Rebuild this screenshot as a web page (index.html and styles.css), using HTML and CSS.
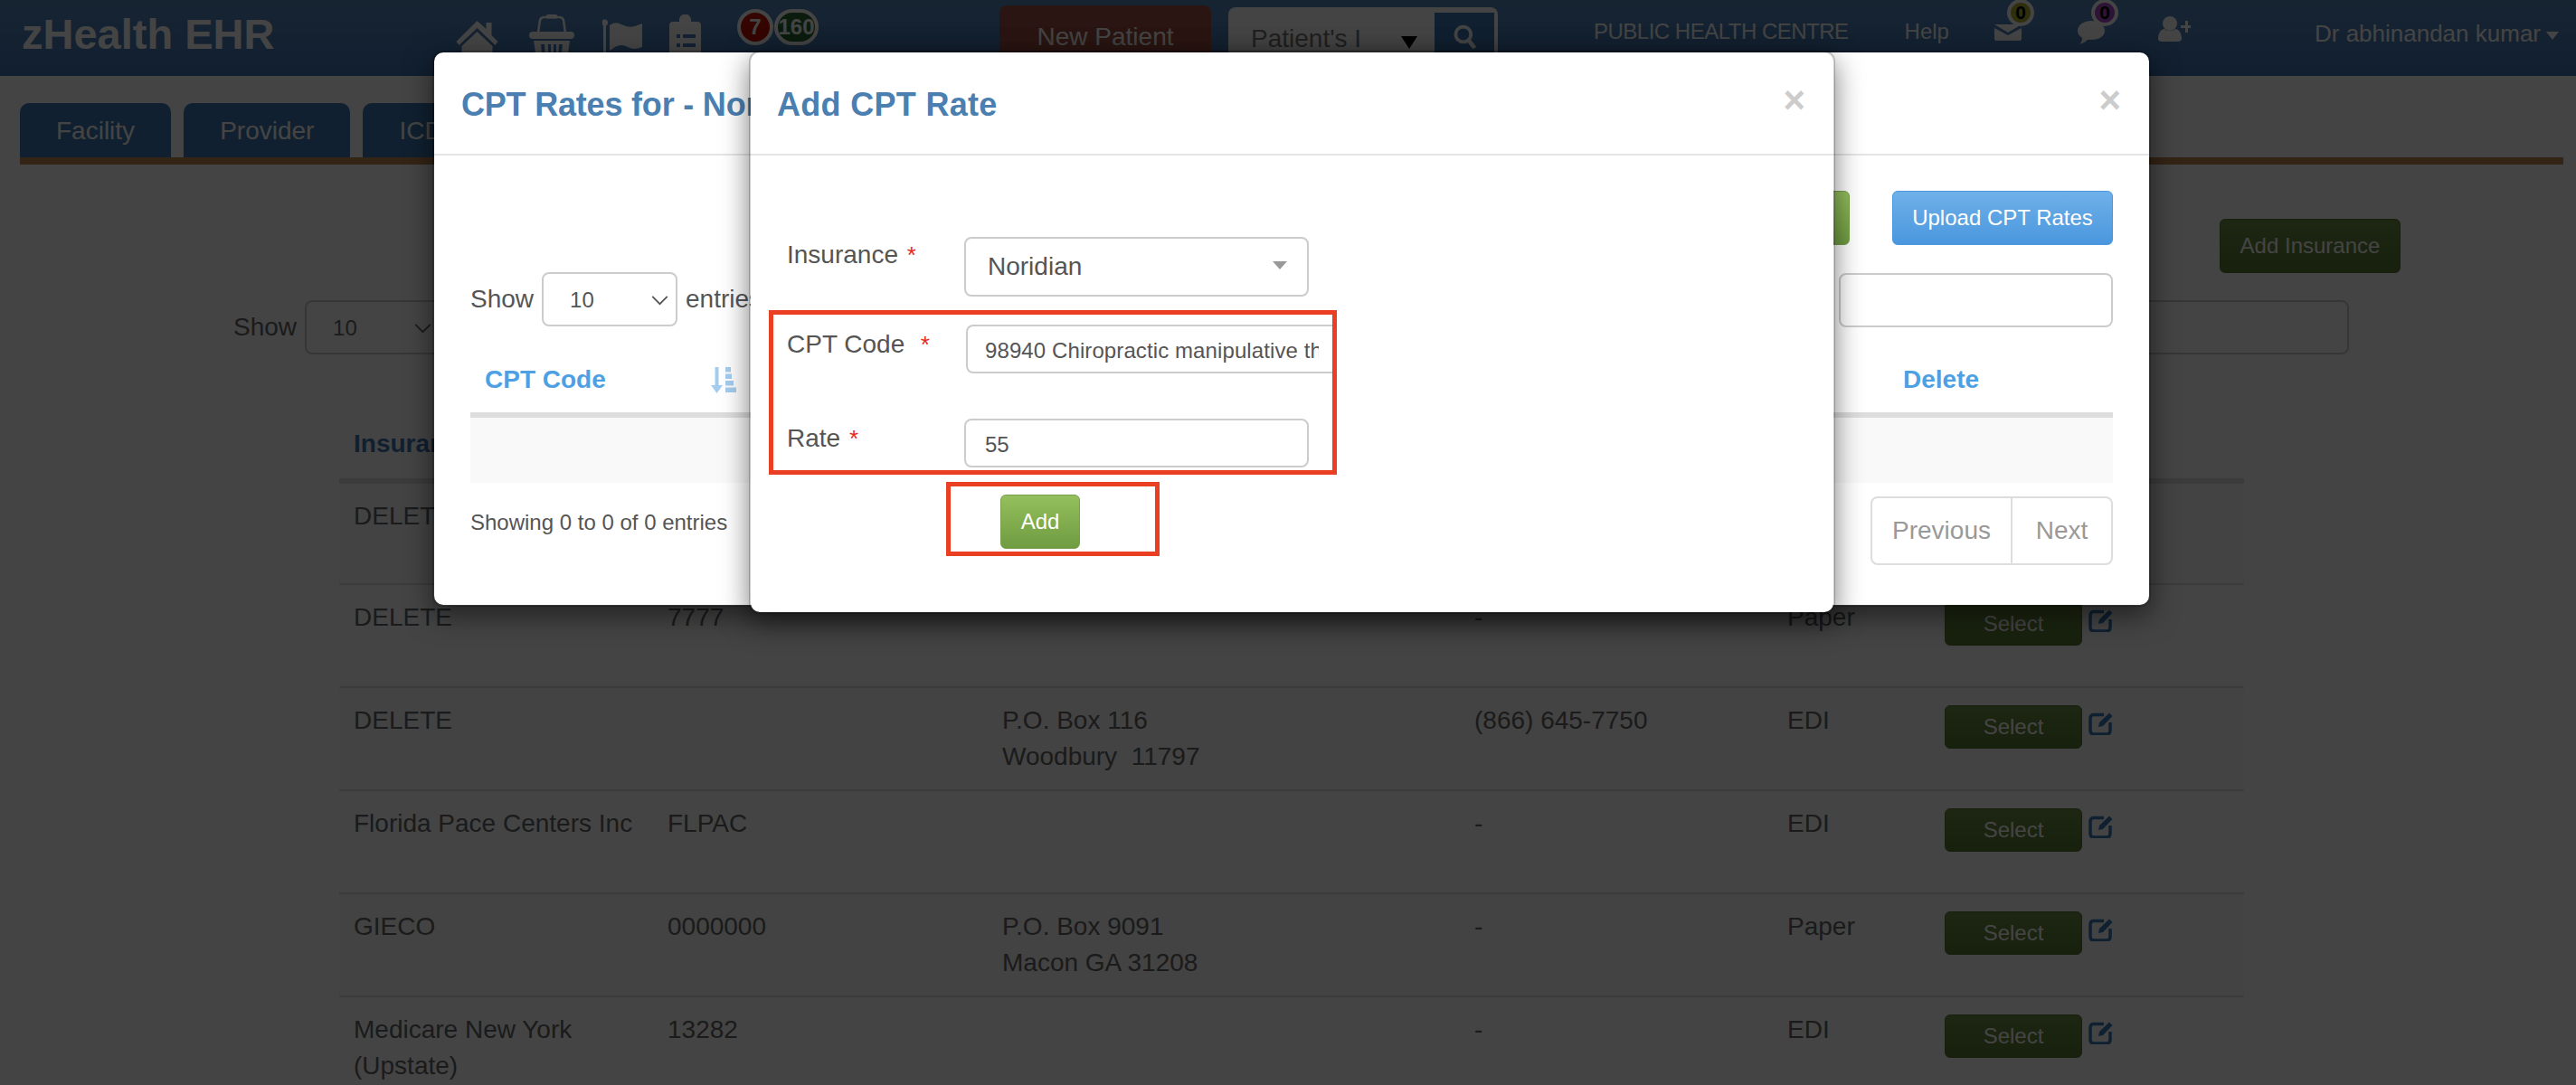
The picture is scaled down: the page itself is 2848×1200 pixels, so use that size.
FILE: index.html
```html
<!DOCTYPE html>
<html lang="en">
<head>
<meta charset="utf-8">
<title>zHealth EHR</title>
<link rel="stylesheet" href="styles.css">
</head>
<body>
<div class="page">
  <header class="navbar">
    <div class="brand">zHealth EHR</div>
    <nav class="nav-icons">
      <svg class="ico ico-home" viewBox="0 0 46 56"><path d="M23 1 33 10V3h6v14l7 7-3 4L23 9 3 28l-3-4z"/><path d="M6 29 23 13l17 16v27H28V38H18v18H6z"/></svg>
      <svg class="ico ico-basket" viewBox="0 0 50 56"><path d="M10 20 12 6Q13 3 17 3H33Q37 3 38 6L40 20" fill="none" stroke="#fff" stroke-width="2.5"/><rect x="19" y="0" width="12" height="4.5" rx="1.5"/><rect x="0" y="19" width="50" height="8" rx="4"/><path d="M5 29H45L41 56H9ZM13 33 15 52H18L17 33ZM21 33V52H24V33ZM27 33V52H30V33ZM33 33 32 52H35L37 33Z" fill-rule="evenodd"/></svg>
      <svg class="ico ico-flag" viewBox="0 0 44 56"><rect x="1" y="6" width="3" height="50"/><circle cx="2.5" cy="5" r="3.5"/><path d="M8 8Q14 3 21 7T36 9L44 6V32Q35 36 28 32T14 32L8 36Z"/></svg>
      <svg class="ico ico-clip" viewBox="0 0 35 56"><path d="M4 8H11V6A6 6 0 0 1 24 6V8H31Q35 8 35 12V52Q35 56 31 56H4Q0 56 0 52V12Q0 8 4 8ZM8 22V26H12V22ZM15 22V26H29V22ZM8 32V36H12V32ZM15 32V36H29V32ZM8 42V46H12V42ZM15 42V46H29V42Z" fill-rule="evenodd"/></svg>
    </nav>
    <div class="badges">
      <span class="badge badge-red">7</span>
      <span class="badge badge-green">160</span>
    </div>
    <button class="new-patient">New Patient</button>
    <div class="patient-search">
      <span class="patient-value">Patient's I</span>
      <span class="patient-caret"></span>
      <span class="patient-go"><svg viewBox="0 0 30 32" class="search-ico"><circle cx="13" cy="13" r="10" fill="none" stroke="#fff" stroke-width="4.5"/><path d="M20 21 28 31" stroke="#fff" stroke-width="5.5" fill="none"/></svg></span>
    </div>
    <span class="nav-link nav-centre">PUBLIC HEALTH CENTRE</span>
    <span class="nav-link nav-help">Help</span>
    <div class="notify notify-mail">
      <svg viewBox="0 0 30 18"><path d="M0 0 15 9 30 0ZM0 4V16Q0 18 2 18H28Q30 18 30 16V4L15 12Z"/></svg>
      <span class="mini-badge mini-yellow">0</span>
    </div>
    <div class="notify notify-chat">
      <svg viewBox="0 0 30 26"><path d="M15 0C24 0 30 5 30 11S24 21 15 21C13 21 12 21 11 21 9 23 6 25 2 26 4 24 5 22 5 19 2 17 0 14 0 11 0 5 6 0 15 0Z"/></svg>
      <span class="mini-badge mini-purple">0</span>
    </div>
    <svg class="ico ico-user" viewBox="0 0 36 28"><circle cx="13" cy="8" r="8"/><path d="M0 25C0 19 3 14 7 14 10 17 16 17 19 14 23 14 26 19 26 25 26 27 24 28 22 28H4C2 28 0 27 0 25Z"/><path d="M30 5V10H25V13H30V18H33V13H36V10H33V5Z"/></svg>
    <span class="nav-user">Dr abhinandan kumar<span class="user-caret"></span></span>
  </header>

  <div class="tabs">
    <a class="tab">Facility</a>
    <a class="tab">Provider</a>
    <a class="tab">ICD Codes</a>
  </div>

  <main class="content">
    <div class="content-actions"><button class="btn btn-green btn-add-ins">Add Insurance</button></div>
    <div class="content-controls">
      <label class="show-label">Show
        <span class="show-select show-select-dim">10<svg class="chev" viewBox="0 0 20 12"><path d="M1 1 10 10 19 1" fill="none" stroke="#666" stroke-width="2"/></svg></span>
      </label>
      <span class="search-box search-box-dim"></span>
    </div>
    <table class="ins-table">
      <colgroup><col class="c1"><col class="c2"><col class="c3"><col class="c4"><col class="c5"><col></colgroup>
      <thead><tr><th>Insurance</th><th></th><th></th><th></th><th></th><th></th></tr></thead>
      <tbody>
        <tr><td>DELETE</td><td></td><td></td><td></td><td></td><td class="act"></td></tr>
        <tr><td>DELETE</td><td>7777</td><td></td><td>-</td><td>Paper</td><td class="act"><button class="btn btn-green btn-select">Select</button><svg class="edit" viewBox="0 0 30 26"><path d="M17 3.5H6Q2 3.5 2 7.5V21Q2 25 6 25H20Q24 25 24 21V12"/><path d="M11 17 12 12 23 1.5 26.5 5 16 16Z"/></svg></td></tr>
        <tr><td>DELETE</td><td></td><td>P.O. Box 116<br>Woodbury&nbsp; 11797</td><td>(866) 645-7750</td><td>EDI</td><td class="act"><button class="btn btn-green btn-select">Select</button><svg class="edit" viewBox="0 0 30 26"><path d="M17 3.5H6Q2 3.5 2 7.5V21Q2 25 6 25H20Q24 25 24 21V12"/><path d="M11 17 12 12 23 1.5 26.5 5 16 16Z"/></svg></td></tr>
        <tr><td>Florida Pace Centers Inc</td><td>FLPAC</td><td></td><td>-</td><td>EDI</td><td class="act"><button class="btn btn-green btn-select">Select</button><svg class="edit" viewBox="0 0 30 26"><path d="M17 3.5H6Q2 3.5 2 7.5V21Q2 25 6 25H20Q24 25 24 21V12"/><path d="M11 17 12 12 23 1.5 26.5 5 16 16Z"/></svg></td></tr>
        <tr><td>GIECO</td><td>0000000</td><td>P.O. Box 9091<br>Macon GA 31208</td><td>-</td><td>Paper</td><td class="act"><button class="btn btn-green btn-select">Select</button><svg class="edit" viewBox="0 0 30 26"><path d="M17 3.5H6Q2 3.5 2 7.5V21Q2 25 6 25H20Q24 25 24 21V12"/><path d="M11 17 12 12 23 1.5 26.5 5 16 16Z"/></svg></td></tr>
        <tr><td>Medicare New York<br>(Upstate)</td><td>13282</td><td></td><td>-</td><td>EDI</td><td class="act"><button class="btn btn-green btn-select">Select</button><svg class="edit" viewBox="0 0 30 26"><path d="M17 3.5H6Q2 3.5 2 7.5V21Q2 25 6 25H20Q24 25 24 21V12"/><path d="M11 17 12 12 23 1.5 26.5 5 16 16Z"/></svg></td></tr>
      </tbody>
    </table>
  </main>
</div>

<div class="backdrop"></div>

<section class="modal modal-rates">
  <div class="modal-head">
    <h2 class="modal-title">CPT Rates for - Noridian</h2>
    <span class="modal-close">×</span>
  </div>
  <div class="rates-body">
    <div class="rates-actions">
      <button class="btn btn-green btn-big">Add</button>
      <button class="btn btn-blue btn-big">Upload CPT Rates</button>
    </div>
    <div class="rates-controls">
      <label class="show-label">Show
        <span class="show-select">10<svg class="chev" viewBox="0 0 20 12"><path d="M1 1 10 10 19 1" fill="none" stroke="#555" stroke-width="2"/></svg></span>
        entries
      </label>
      <span class="search-box"></span>
    </div>
    <table class="rates-table">
      <colgroup><col class="r1"><col><col class="r3"></colgroup>
      <thead><tr>
        <th><span class="th-sort">CPT Code<svg class="sort-ico" viewBox="0 0 28 29"><path d="M4.5 0H8.5V20H13L6.5 29 0 20H4.5Z"/><path d="M16 0H22V5.5H16ZM16 7.5H23V13H16ZM16 15H25V20.5H16ZM16 22.5H28V28H16Z"/></svg></span></th>
        <th></th>
        <th>Delete</th>
      </tr></thead>
      <tbody><tr><td colspan="3"></td></tr></tbody>
    </table>
    <div class="rates-foot">
      <span class="rates-info">Showing 0 to 0 of 0 entries</span>
      <div class="pager"><span class="pager-item pager-prev">Previous</span><span class="pager-item pager-next">Next</span></div>
    </div>
  </div>
</section>

<section class="modal modal-add">
  <div class="modal-head">
    <h2 class="modal-title">Add CPT Rate</h2>
    <span class="modal-close">×</span>
  </div>
  <form class="add-form">
    <div class="form-row row-ins">
      <label class="form-label">Insurance <span class="star">*</span></label>
      <div class="field field-select">Noridian<span class="select-arrow"></span></div>
    </div>
    <div class="form-row row-code">
      <label class="form-label">CPT Code&nbsp; <span class="star">*</span></label>
      <div class="field field-code"><span class="field-clip">98940 Chiropractic manipulative therapy</span></div>
    </div>
    <div class="form-row row-rate">
      <label class="form-label">Rate <span class="star">*</span></label>
      <div class="field field-rate">55</div>
    </div>
    <button class="btn btn-green btn-add" type="button">Add</button>
  </form>
  <div class="annot annot-fields"></div>
  <div class="annot annot-add"></div>
</section>
</body>
</html>
```
FILE: styles.css
```css
* { box-sizing: border-box; }
html, body { margin: 0; height: 1200px; overflow: hidden; }
body { font-family: "Liberation Sans", Arial, sans-serif; font-size: 28px; color: #666; background: #fff; position: relative; }
.page { height: 1200px; overflow: hidden; }

/* navbar */
.navbar { height: 84px; display: flex; align-items: flex-start; background: linear-gradient(#5587bc, #3f74b4); color: #fff; white-space: nowrap; }
.navbar > * { flex: none; }
.brand { font-size: 47px; font-weight: 700; line-height: 54px; margin: 11px 0 0 24px; width: 477px; }
.ico { fill: #fff; display: block; }
.nav-icons { display: flex; gap: 30px; }
.ico-home { width: 53px; height: 56px; margin-top: 22px; }
.ico-basket { width: 52px; height: 56px; margin-top: 16px; }
.ico-flag { width: 44px; height: 56px; margin-top: 20px; }
.ico-clip { width: 35px; height: 56px; margin-top: 16px; }
.badges { display: flex; gap: 1px; margin: 10px 0 0 40px; }
.badge { height: 40px; border: 4px solid #fff; border-radius: 20px; color: #fff; font-size: 24px; font-weight: 700; line-height: 32px; text-align: center; }
.badge-red { width: 40px; background: #c81404; }
.badge-green { width: 49px; background: #2c6a34; }
.new-patient { width: 234px; height: 70px; margin: 6px 0 0 200px; border: 0; border-radius: 8px; background: #a04e44; color: #fff; font: 28px/60px "Liberation Sans", Arial, sans-serif; padding: 0; }
.patient-search { width: 298px; height: 70px; margin: 8px 0 0 19px; display: flex; background: #fff; border-radius: 8px; padding: 6px 4px 0 25px; color: #777; }
.patient-value { width: 140px; font-size: 28px; line-height: 58px; overflow: hidden; }
.patient-caret { width: 0; height: 0; margin: 26px 0 0 29px; border: 9px solid transparent; border-top: 14px solid #000; border-bottom: 0; }
.patient-go { width: 67px; margin-left: 19px; background: #3f78b4; display: flex; justify-content: center; padding-top: 13px; }
.search-ico { width: 27px; height: 27px; }
.nav-link { font-size: 24px; line-height: 30px; margin-top: 20px; }
.nav-centre { margin-left: 106px; letter-spacing: -0.5px; }
.nav-help { margin-left: 62px; }
.notify { position: relative; }
.notify svg { display: block; fill: #fff; }
.notify-mail { margin: 27px 0 0 50px; width: 30px; }
.notify-mail svg { width: 30px; height: 18px; }
.notify-chat { margin: 23px 0 0 62px; width: 30px; }
.notify-chat svg { width: 30px; height: 26px; }
.mini-badge { position: absolute; width: 30px; height: 30px; border: 4px solid #fff; border-radius: 15px; color: #000; font-size: 21px; font-weight: 700; line-height: 22px; text-align: center; }
.notify-mail .mini-badge { top: -28px; left: 14px; }
.notify-chat .mini-badge { top: -24px; left: 15px; }
.mini-yellow { background: #b0b030; }
.mini-purple { background: #a848c8; }
.ico-user { width: 36px; height: 28px; margin: 18px 0 0 59px; }
.nav-user { font-size: 26px; line-height: 34px; margin: 20px 0 0 137px; display: flex; align-items: center; }
.user-caret { width: 0; height: 0; margin: 4px 0 0 6px; border: 7px solid transparent; border-top: 9px solid #fff; border-bottom: 0; }

/* tabs */
.tabs { display: flex; gap: 14px; margin: 30px 14px 0 22px; border-bottom: 8px solid #c08850; }
.tab { height: 60px; padding: 0 40px; background: #3f78b4; color: #fff; border-radius: 10px 10px 0 0; line-height: 62px; }

/* page content */
.btn { border-radius: 6px; border: 1px solid transparent; color: #fff; padding: 0; font-family: inherit; font-size: 24px; }
.btn-green { background: linear-gradient(#94bf5c, #6f9c42); border-color: #76a04a; }
.btn-blue { background: linear-gradient(#6fb0e8, #4a97de); border-color: #4a97de; }
.content-actions { display: flex; justify-content: flex-end; padding: 60px 194px 0 0; }
.content .btn-green { background: linear-gradient(#6e9044, #567a30); border-color: #567a30; }
.btn-add-ins { width: 200px; height: 60px; }
.content-controls { display: flex; justify-content: space-between; align-items: flex-start; margin-top: 30px; padding: 0 251px 0 258px; }
.show-label { display: flex; align-items: center; line-height: 60px; gap: 9px; }
.show-select { position: relative; width: 150px; height: 60px; border: 2px solid #ccc; border-radius: 8px; background: #fff; font-size: 24px; line-height: 58px; padding-left: 29px; }
.show-select-dim { color: #666; }
.chev { position: absolute; right: 8px; top: 24px; width: 19px; height: 11px; }
.search-box { display: block; width: 303px; height: 60px; border: 2px solid #ccc; border-radius: 8px; background: #fff; }
.search-box-dim { width: 800px; }

.ins-table { width: 2106px; margin-left: 375px; border-collapse: collapse; table-layout: fixed; }
.c1 { width: 347px; } .c2 { width: 370px; } .c3 { width: 522px; } .c4 { width: 346px; } .c5 { width: 174px; }
.ins-table th { padding: 79px 16px 18px; line-height: 40px; text-align: left; color: #3f78b4; border-bottom: 6px solid #ddd; }
.ins-table td { height: 114px; padding: 16px; line-height: 40px; vertical-align: top; border-bottom: 2px solid #ddd; }
.ins-table tbody tr:nth-child(odd) { background: #f9f9f9; }
.ins-table .act { padding-top: 19px; white-space: nowrap; }
.btn-select { width: 152px; height: 48px; vertical-align: top; }
.edit { width: 30px; height: 26px; margin: 7px 0 0 7px; vertical-align: top; fill: #3a78b8; }
.edit path:first-child { fill: none; stroke: #3a78b8; stroke-width: 3.5; }

/* overlay */
.backdrop { position: absolute; inset: 0; background: rgba(0, 0, 0, .735); }
.modal { position: absolute; background: #fff; background-clip: padding-box; border: 2px solid rgba(0, 0, 0, .2); border-radius: 12px; box-shadow: 0 10px 30px rgba(0, 0, 0, .5); color: #555; }
.modal-rates { left: 478px; top: 56px; width: 1900px; height: 615px; }
.modal-add { left: 828px; top: 56px; width: 1201px; height: 623px; }
.modal-head { height: 114px; display: flex; justify-content: space-between; padding: 0 31px 0 30px; border-bottom: 2px solid #e5e5e5; }
.modal-add .modal-head { padding-left: 29px; }
.modal-title { margin: 38px 0 0; font-size: 36px; line-height: 40px; font-weight: 700; color: #4a7fb0; white-space: nowrap; letter-spacing: .3px; }
.modal-rates .modal-title { letter-spacing: -.2px; }
.modal-close { font-size: 42px; font-weight: 700; color: #ccc; line-height: 40px; margin-top: 33px; }

.rates-body { padding: 39px 40px 0; }
.rates-actions { display: flex; justify-content: flex-end; gap: 47px; }
.btn-big { height: 60px; }
.rates-actions .btn-green { width: 200px; }
.rates-actions .btn-blue { width: 244px; }
.rates-controls { display: flex; justify-content: space-between; align-items: flex-start; margin-top: 30px; }
.rates-controls .search-box { margin-top: 1px; }
.rates-table { width: 100%; border-collapse: collapse; table-layout: fixed; }
.r1 { width: 310px; } .r3 { width: 248px; }
.rates-table th { padding: 38px 16px 16px; line-height: 40px; text-align: left; color: #4ea0e5; border-bottom: 6px solid #ddd; }
.th-sort { display: flex; justify-content: space-between; align-items: center; }
.sort-ico { width: 28px; height: 29px; fill: #a5cdef; }
.rates-table td { height: 75px; padding: 0; background: #f9f9f9; }
.rates-foot { display: flex; justify-content: space-between; align-items: flex-start; margin-top: 15px; }
.rates-info { font-size: 24px; line-height: 28px; margin-top: 15px; }
.pager { display: flex; height: 76px; border: 2px solid #ddd; border-radius: 8px; color: #999; line-height: 72px; }
.pager-prev { width: 155px; text-align: center; border-right: 2px solid #ddd; }
.pager-next { width: 109px; text-align: center; }

.add-form { padding: 90px 40px 0; }
.form-row { display: flex; align-items: flex-start; }
.form-label { width: 196px; line-height: 40px; white-space: nowrap; flex: none; }
.star { color: #e8291a; font-size: 26px; margin-left: 2px; }
.field { border: 2px solid #ccc; border-radius: 8px; background: #fff; position: relative; }
.field-select { width: 381px; height: 66px; padding-left: 24px; line-height: 62px; color: #555; }
.select-arrow { position: absolute; right: 22px; top: 25px; width: 0; height: 0; border: 8px solid transparent; border-top: 9px solid #999; border-bottom: 0; }
.row-code { margin-top: 31px; }
.row-code .form-label { width: 198px; margin-top: 2px; }
.row-rate .form-label { margin-top: 2px; }
.field-code { width: 409px; height: 54px; padding: 0 19px; font-size: 24px; line-height: 54px; border-right: 0; border-radius: 8px 0 0 8px; letter-spacing: .1px; }
.field-clip { display: block; overflow: hidden; white-space: nowrap; }
.row-rate { margin-top: 50px; }
.field-rate { width: 381px; height: 54px; padding-left: 21px; font-size: 24px; line-height: 54px; }
.btn-add { display: block; width: 88px; height: 60px; margin: 30px 0 0 236px; }
.annot { position: absolute; border: 5px solid #ea3f22; }
.annot-fields { left: 20px; top: 285px; width: 628px; height: 182px; }
.annot-add { left: 216px; top: 475px; width: 236px; height: 82px; }
```
